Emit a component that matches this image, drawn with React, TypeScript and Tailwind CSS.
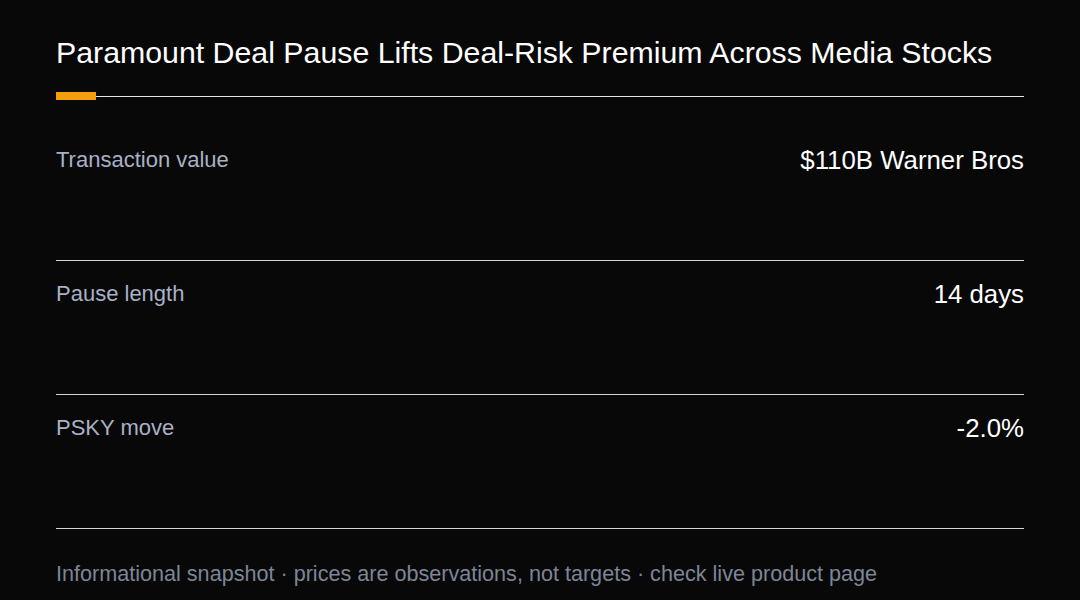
const rows = [
  { label: 'Transaction value', value: '$110B Warner Bros' },
  { label: 'Pause length', value: '14 days' },
  { label: 'PSKY move', value: '-2.0%' },
]

export default function App() {
  return (
    <div
      className="w-[1080px] h-[600px] bg-[#080808] px-14 pt-[35px] overflow-hidden"
      style={{ fontFamily: '"Liberation Sans", Arial, sans-serif' }}
    >
      <h1 className="text-[30.3px] leading-9 text-white">
        Paramount Deal Pause Lifts Deal-Risk Premium Across Media Stocks
      </h1>

      {/* accent rule */}
      <div className="relative mt-[25px] h-px bg-[#e5e5e5]">
        <div className="absolute left-0 top-[-4px] h-2 w-10 bg-[#f59e0b]" />
      </div>

      <div className="mt-[30px]">
        {rows.map((r) => (
          <div
            key={r.label}
            className="flex h-[134px] items-start justify-between border-b border-[#d4d4d4] pt-[19px]"
          >
            <span className="text-[22px] leading-7 text-[#a8b1c6]">{r.label}</span>
            <span className="text-[25.8px] leading-7 text-white">{r.value}</span>
          </div>
        ))}
      </div>

      <p className="pt-[31px] text-[21.6px] leading-7 text-[#7d8597]">
        Informational snapshot · prices are observations, not targets · check live product page
      </p>
    </div>
  )
}
